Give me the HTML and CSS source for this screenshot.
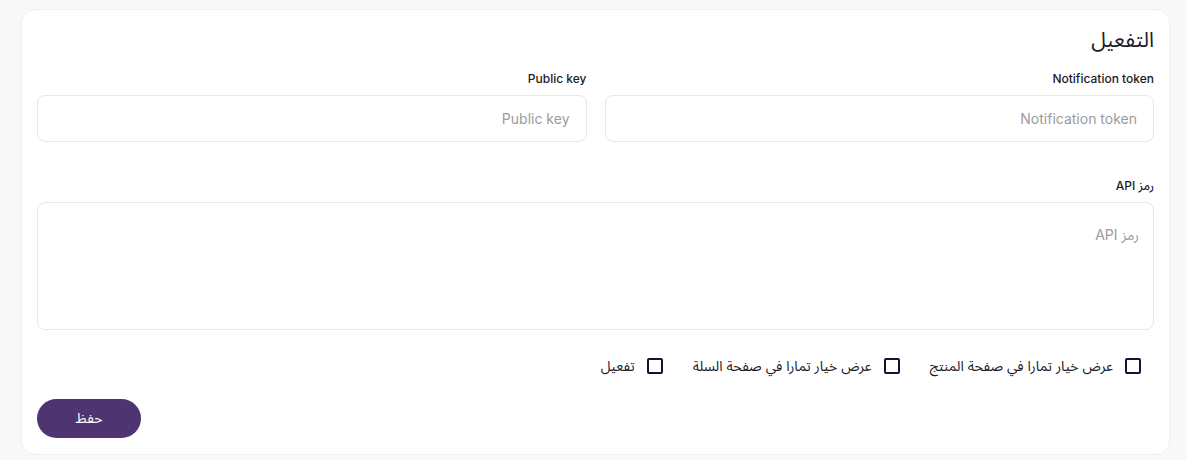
FILE: index.html
```html
<!DOCTYPE html>
<html lang="ar" dir="rtl">
<head>
<meta charset="utf-8">
<title>التفعيل</title>
<link rel="stylesheet" href="styles.css">
</head>
<body>
<div class="card">
  <h2 class="title">التفعيل</h2>
  <div class="row-2">
    <div class="field">
      <label class="label">Notification token</label>
      <input class="input" type="text" placeholder="Notification token">
    </div>
    <div class="field">
      <label class="label">Public key</label>
      <input class="input" type="text" placeholder="Public key">
    </div>
  </div>
  <div class="field field-api">
    <label class="label">رمز API</label>
    <textarea class="textarea" placeholder="رمز API"></textarea>
  </div>
  <div class="checks">
    <label class="check"><input type="checkbox" class="box"><span>عرض خيار تمارا في صفحة المنتج</span></label>
    <label class="check"><input type="checkbox" class="box"><span>عرض خيار تمارا في صفحة السلة</span></label>
    <label class="check"><input type="checkbox" class="box"><span>تفعيل</span></label>
  </div>
  <div class="actions">
    <button class="btn" type="button">حفظ</button>
  </div>
</div>
</body>
</html>
```

FILE: styles.css
```css
* { box-sizing: border-box; }
html, body { margin: 0; padding: 0; }
body {
  background: #f8f8f8;
  font-family: Inter, "Noto Sans Arabic", "DejaVu Sans", sans-serif;
  color: #1c1a26;
  padding: 9px 16px 5px 21px;
}
.card {
  background: #fff;
  border-radius: 14px;
  border: 1px solid #f0f0f2;
  padding: 15px 15px 16px 15px;
}
.title {
  margin: 0;
  font-size: 21px;
  font-weight: 400;
  line-height: 30px;
  color: #1c1a26;
}
.row-2 {
  display: grid;
  grid-template-columns: 1fr 1fr;
  gap: 18px;
  margin-top: 16px;
}
.field { display: flex; flex-direction: column; }
.label {
  font-size: 12px;
  font-weight: 500;
  line-height: 16px;
  margin-bottom: 8px;
  color: #1c1a26;
}
.input, .textarea {
  font-family: Inter, "Noto Sans Arabic", "DejaVu Sans", sans-serif;
  font-size: 14px;
  border: 1px solid #e7e7ec;
  border-radius: 8px;
  background: #fff;
  color: #1c1a26;
  outline: none;
}
.input {
  height: 47px;
  padding: 0 16px;
}
.textarea {
  height: 128px;
  padding: 18px 14px;
  resize: none;
}
.input::placeholder, .textarea::placeholder { color: #9b9ba0; }
.field-api { margin-top: 36px; }
.checks {
  display: flex;
  align-items: center;
  gap: 30px;
  margin-top: 28px;
  padding-right: 13px;
  height: 16px;
}
.check {
  display: flex;
  align-items: center;
  gap: 12px;
  font-size: 14px;
  color: #1c1a26;
}
.box {
  appearance: none;
  -webkit-appearance: none;
  margin: 0;
  width: 16px;
  height: 16px;
  border: 2px solid #1f0d33;
  border-radius: 2px;
  background: #fff;
}
.actions {
  display: flex;
  justify-content: flex-end;
  margin-top: 25px;
}
.btn {
  width: 104px;
  height: 39px;
  border: none;
  border-radius: 20px;
  background: #4e3572;
  color: #fff;
  font-family: Inter, "Noto Sans Arabic", "DejaVu Sans", sans-serif;
  font-size: 14px;
}
```
